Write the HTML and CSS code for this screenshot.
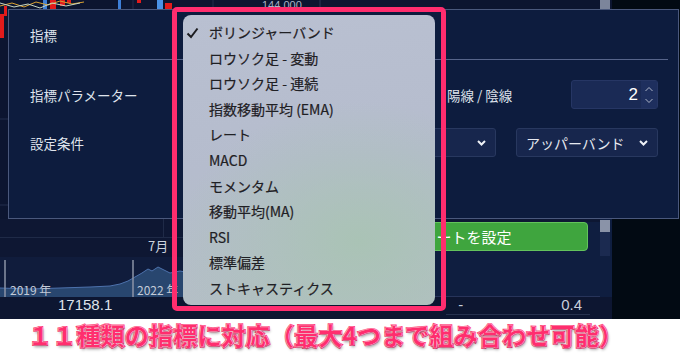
FILE: index.html
```html
<!DOCTYPE html>
<html lang="ja">
<head>
<meta charset="utf-8">
<link rel="stylesheet" href="styles.css">
</head>
<body>
<div class="shot">
  <div class="app-main">
    <svg class="top-chart" width="612" height="219" viewBox="0 0 612 219">
      <rect width="612" height="219" fill="#0c1530"/>
      <line x1="0" y1="119" x2="612" y2="119" stroke="#232e4c" stroke-width="1"/>
      <line x1="0" y1="205" x2="612" y2="205" stroke="#232e4c" stroke-width="1"/>
      <line x1="133" y1="0" x2="133" y2="219" stroke="#222d4a"/>
      <line x1="213" y1="0" x2="213" y2="219" stroke="#222d4a"/>
      <line x1="320" y1="0" x2="320" y2="219" stroke="#2a3654"/>
      <rect x="0" y="14" width="4" height="24" fill="#e21b1b"/>
      <rect x="4" y="6" width="3" height="10" fill="#e21b1b"/>
      <rect x="43" y="0" width="4" height="9" fill="#3d7fd8"/>
      <rect x="50" y="0" width="6" height="9" fill="#e21b1b"/>
      <rect x="60" y="0" width="5" height="6" fill="#e21b1b"/>
      <rect x="67" y="0" width="4" height="3" fill="#e21b1b"/>
      <rect x="118" y="0" width="3" height="9" fill="#3d7fd8"/>
      <rect x="137" y="0" width="4" height="3" fill="#e21b1b"/>
      <rect x="157" y="0" width="6" height="9" fill="#4a92e6"/>
      <rect x="165" y="3" width="7" height="6" fill="#e21b1b"/>
      <polyline points="0,6 12,3 24,7 36,2 48,5 60,1 72,4 84,2" fill="none" stroke="#d9a132" stroke-width="1"/>
      <polyline points="0,3 14,7 28,4 40,8 52,3 66,6 80,3" fill="none" stroke="#c8d6c0" stroke-width="1"/>
      <text x="262" y="9" class="axis-text">144 000</text>
      <rect x="600" y="0" width="10" height="9" fill="#7c859b"/>
    </svg>
    <div class="row-b">
      <div class="mini">
        <div class="mini-top"><span class="month">7月</span></div>
        <svg class="mini-chart" width="330" height="40" viewBox="0 0 330 40">
          <rect width="330" height="40" fill="#101c3c"/>
          <path d="M0,31 L30,32 L60,31 L90,30 L110,29 L120,27 L128,24 L135,20 L142,16 L148,12 L152,14 L158,10 L164,13 L170,16 L180,14 L200,18 L230,15 L260,17 L300,14 L330,15 L330,40 L0,40 Z" fill="#28466f"/>
          <path d="M0,31 L30,32 L60,31 L90,30 L110,29 L120,27 L128,24 L135,20 L142,16 L148,12 L152,14 L158,10 L164,13 L170,16 L180,14 L200,18 L230,15 L260,17 L300,14 L330,15" fill="none" stroke="#4d72ad" stroke-width="1"/>
          <line x1="5" y1="3" x2="5" y2="40" stroke="#8b93a6" stroke-width="1.5"/>
          <line x1="133" y1="3" x2="133" y2="40" stroke="#8b93a6" stroke-width="1.5"/>
          <text x="10" y="38" class="year-text">2019 年</text>
          <text x="137" y="38" class="year-text">2022 年</text>
        </svg>
      </div>
      <div class="panel-b">
        <div class="alert-btn">アラートを設定</div>
      </div>
      <div class="scroll-col"><div class="thumb"></div><div class="track"></div></div>
    </div>
    <div class="row-c">
      <span class="val val-main">17158.1</span>
      <span class="val val-dash">-</span>
      <span class="val val-num">0.4</span>
    </div>
  </div>
  <div class="side-black"></div>

  <div class="modal">
    <div class="m-row m-row1">
      <span class="m-label">指標</span>
    </div>
    <div class="divider"></div>
    <div class="m-row m-row2">
      <span class="m-label">指標パラメーター</span>
      <span class="param-label">陽線 / 陰線</span>
      <div class="num-input">
        <span class="num-val">2</span>
        <span class="spin">
          <svg width="10" height="22" viewBox="0 0 10 22"><polyline points="1.5,7 5,3.5 8.5,7" fill="none" stroke="#aeb6c8" stroke-width="1"/><polyline points="1.5,15 5,18.5 8.5,15" fill="none" stroke="#aeb6c8" stroke-width="1"/></svg>
        </span>
      </div>
    </div>
    <div class="m-row m-row3">
      <span class="m-label">設定条件</span>
      <div class="sel sel1"><span class="sel-text">終値</span><svg class="chev" width="9" height="6" viewBox="0 0 9 6"><polyline points="1,1 4.5,4.5 8,1" fill="none" stroke="#eef1f6" stroke-width="2"/></svg></div>
      <div class="sel sel2"><span class="sel-text">アッパーバンド</span><svg class="chev" width="9" height="6" viewBox="0 0 9 6"><polyline points="1,1 4.5,4.5 8,1" fill="none" stroke="#eef1f6" stroke-width="2"/></svg></div>
    </div>
  </div>

  <div class="hl">
    <ul class="menu">
      <li class="item checked"><svg class="check" width="13" height="12" viewBox="0 0 13 12"><polyline points="1.5,6.5 5,10 11.5,1.5" fill="none" stroke="#1c1c20" stroke-width="2"/></svg>ボリンジャーバンド</li>
      <li class="item">ロウソク足 - 変動</li>
      <li class="item">ロウソク足 - 連続</li>
      <li class="item">指数移動平均 (EMA)</li>
      <li class="item">レート</li>
      <li class="item">MACD</li>
      <li class="item">モメンタム</li>
      <li class="item">移動平均(MA)</li>
      <li class="item">RSI</li>
      <li class="item">標準偏差</li>
      <li class="item">ストキャスティクス</li>
    </ul>
  </div>
</div>
<div class="caption">１１種類の指標に対応（最大4つまで組み合わせ可能）</div>
</body>
</html>
```

FILE: styles.css
```css
* { box-sizing: border-box; }
html, body {
  margin: 0;
  padding: 0;
}
body {
  width: 680px;
  height: 359px;
  overflow: hidden;
  background: #ffffff;
  font-family: "Noto Sans CJK JP", "Noto Sans", sans-serif;
}
.shot {
  position: relative;
  width: 680px;
  height: 319px;
  overflow: hidden;
  background: #0d1733;
  display: grid;
  grid-template-columns: 612px 68px;
}
.app-main {
  display: flex;
  flex-direction: column;
}
.top-chart { display: block; }
.axis-text {
  font-family: "Liberation Sans", sans-serif;
  font-size: 11px;
  fill: #a9b2c4;
}
.year-text {
  font-family: "Noto Sans CJK JP", sans-serif;
  font-size: 12px;
  fill: #c3cad7;
}
.side-black { background: #020a13; }

.row-b {
  height: 78px;
  display: flex;
}
.mini {
  width: 330px;
  display: flex;
  flex-direction: column;
  background: #0e1733;
}
.mini-top {
  height: 38px;
  display: flex;
  align-items: flex-end;
  padding-left: 148px;
  padding-bottom: 3px;
  background:
    linear-gradient(#1f2a47, #1f2a47) 0 18px / 100% 1px no-repeat,
    linear-gradient(#1f2a47, #1f2a47) 163px 0 / 1px 18px no-repeat;
}
.month {
  font-size: 13px;
  line-height: 16px;
  color: #cdd3de;
}
.mini-chart { display: block; }
.panel-b {
  width: 270px;
  background: linear-gradient(#0d1733 0 3px, #0f1e40 3px);
  padding: 3px 12px 0 0;
  border-bottom: 1px solid #27345a;
}
.alert-btn {
  height: 29px;
  background: #3fa53e;
  border: 1px solid #63c35c;
  border-radius: 4px;
  color: #ffffff;
  font-size: 15px;
  line-height: 27px;
  text-align: center;
}
.scroll-col {
  width: 12px;
  display: flex;
  flex-direction: column;
  background: #0f1e40;
}
.thumb { height: 12px; background: #8a93a8; margin-top: 1px; width: 10px; }
.track { height: 24px; background: #1b2a50; width: 10px; }

.row-c {
  height: 22px;
  overflow: hidden;
  display: flex;
  align-items: flex-start;
  background: linear-gradient(#27324f, #27324f) 446px 17px / 144px 1px no-repeat, #0d1631;
}
.val {
  font-family: "Liberation Sans", sans-serif;
  font-size: 15px;
  line-height: 16px;
  margin-top: 0;
  color: #dfe3eb;
}
.val-main { margin-left: 58px; }
.val-dash { margin-left: 346px; color: #c7cedb; }
.val-num { margin-left: 98px; color: #c7cedb; }

.modal {
  position: absolute;
  left: 8px;
  top: 9px;
  width: 671px;
  height: 210px;
  background: #0d1c3e;
  border: 1px solid #4a587c;
  padding: 0 10px;
  display: flex;
  flex-direction: column;
}
.m-row {
  display: flex;
  align-items: center;
  padding-right: 10px;
}
.m-label {
  font-size: 13.5px;
  color: #dfe3ec;
  padding-left: 11px;
  flex: 1;
}
.m-row1 { height: 49px; }
.divider { height: 1px; background: #56648a; }
.m-row2 { height: 29px; margin-top: 20px; }
.m-row3 { height: 29px; margin-top: 19px; }
.param-label {
  font-size: 13.5px;
  color: #dfe3ec;
  width: 124px;
}
.num-input {
  width: 87px;
  height: 29px;
  background: #1a2a55;
  border: 1px solid #263664;
  border-radius: 3px;
  display: flex;
  align-items: center;
  justify-content: flex-end;
}
.num-val {
  font-family: "Liberation Sans", sans-serif;
  font-size: 17px;
  color: #ffffff;
  padding-right: 3px;
}
.spin {
  width: 16px;
  height: 27px;
  background: #1e2f5e;
  display: flex;
  align-items: center;
  justify-content: center;
}
.spin svg { display: block; }
.sel {
  height: 29px;
  background: #17264d;
  border: 1px solid #28385f;
  border-radius: 3px;
  display: flex;
  align-items: center;
  justify-content: space-between;
  padding: 0 9px;
}
.sel-text {
  font-size: 14px;
  color: #e6e9f0;
}
.sel1 { width: 150px; margin-right: 20px; }
.sel2 { width: 142px; }
.chev { display: block; }

.hl {
  position: absolute;
  left: 172px;
  top: 7px;
  width: 274px;
  height: 304px;
  border: 5px solid #ff2d6e;
  border-radius: 5px;
  padding: 3px 6px 1px 6px;
}
.menu {
  margin: 0;
  list-style: none;
  height: 100%;
  border-radius: 8px;
  padding: 5px 0 0 0;
  background:
    radial-gradient(ellipse 180px 140px at 70% 78%, rgba(168, 196, 178, 0.85), rgba(168, 196, 178, 0) 100%),
    linear-gradient(175deg, #b9c0d1 0%, #b5bccd 50%, #b3bfc4 100%);
}
.item {
  position: relative;
  height: 25.6px;
  line-height: 25.6px;
  padding-left: 26px;
  font-size: 14px;
  color: #1f2024;
  white-space: nowrap;
  -webkit-text-stroke: 0.2px #1f2024;
}
.check {
  position: absolute;
  left: 3px;
  top: 7px;
}
.caption {
  height: 40px;
  padding-left: 28px;
  font-size: 24px;
  line-height: 32px;
  font-weight: 700;
  letter-spacing: 0.2px;
  color: #ff2e6e;
  white-space: nowrap;
  -webkit-text-stroke: 2.2px #ff2e6e;
  paint-order: stroke fill;
  text-shadow: 0 0 1px #fff, 0 0 2px #fff, 1px 2px 3px rgba(0, 0, 0, 0.4);
}
```
